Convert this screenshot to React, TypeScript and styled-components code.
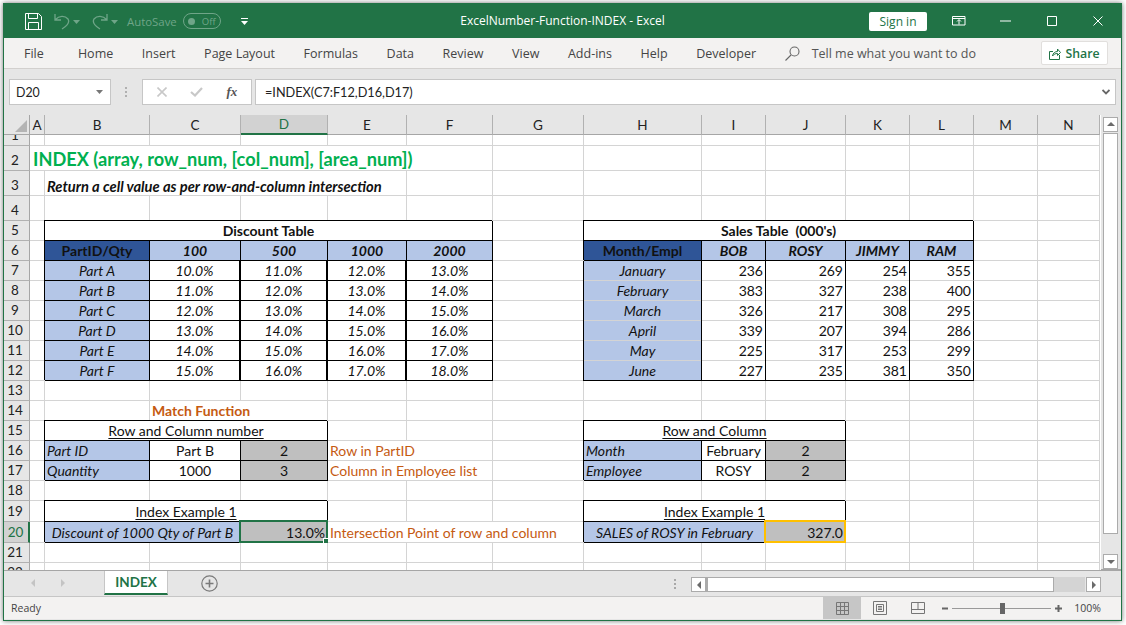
import React from 'react';
import styled, { createGlobalStyle } from 'styled-components';

const GREEN = '#217346';
const UI_FONT = '"Open Sans", "Noto Sans", sans-serif';
const SHEET_FONT = 'Lato, "Noto Sans", sans-serif';

const COLUMNS: [string, number][] = [
  ['A', 15], ['B', 105], ['C', 91], ['D', 87], ['E', 79], ['F', 86], ['G', 91],
  ['H', 118], ['I', 64], ['J', 80], ['K', 64], ['L', 64], ['M', 64], ['N', 62],
];
const ROW_HEIGHTS = [11, 25, 25, 25, 20, 20, 20, 20, 20, 20, 20, 20, 20, 20, 20, 20, 20, 20, 21, 21, 20, 20];

type Tone = 'dark' | 'light' | 'grey' | 'white';
type CellSpec = {
  text?: string;
  span?: number;
  tone?: Tone;
  bold?: boolean;
  italic?: boolean;
  align?: 'left' | 'center' | 'right';
  color?: string;
  boxed?: boolean;
  ledger?: 'middle' | 'last';
  heavy?: boolean;
  size?: number;
  heading?: boolean;
  underline?: boolean;
  frame?: 'selected' | 'orange';
};

const ORANGE = '#c55a11';
const cells: Record<string, CellSpec> = {
  A2: { text: 'INDEX (array, row_num, [col_num], [area_num])', span: 6, bold: true, color: '#00b050', size: 18.2, heading: true, align: 'left' },
  B3: { text: 'Return a cell value as per row-and-column intersection', span: 4, bold: true, italic: true, size: 14.7, align: 'left' },
  B5: { text: 'Discount Table', span: 5, bold: true, boxed: true, tone: 'white', align: 'center' },
  H5: { text: "Sales Table  (000's)", span: 5, bold: true, boxed: true, tone: 'white', align: 'center' },
  C14: { text: 'Match Function', span: 2, bold: true, color: ORANGE, align: 'left' },
  B15: { text: 'Row and Column number', span: 3, underline: true, boxed: true, tone: 'white', align: 'center' },
  H15: { text: 'Row and Column', span: 3, underline: true, boxed: true, tone: 'white', align: 'center' },
  E16: { text: 'Row in PartID', span: 2, color: ORANGE, align: 'left' },
  E17: { text: 'Column in Employee list', span: 2, color: ORANGE, align: 'left' },
  B19: { text: 'Index Example 1', span: 3, underline: true, boxed: true, tone: 'white', align: 'center' },
  H19: { text: 'Index Example 1', span: 3, underline: true, boxed: true, tone: 'white', align: 'center' },
  B20: { text: 'Discount of 1000 Qty of Part B', span: 2, italic: true, tone: 'light', boxed: true, align: 'center' },
  D20: { text: '13.0%', tone: 'grey', boxed: true, align: 'right', frame: 'selected' },
  E20: { text: 'Intersection Point of row and column', span: 3, color: ORANGE, align: 'left' },
  H20: { text: 'SALES of ROSY in February', span: 2, italic: true, tone: 'light', boxed: true, align: 'center' },
  J20: { text: '327.0', tone: 'grey', boxed: true, align: 'right', frame: 'orange' },
};

const fillTable = (
  cols: string[],
  title: string,
  heads: string[],
  labels: string[],
  values: (string | number)[][],
  numeric: boolean,
) => {
  cells[`${cols[0]}6`] = { text: title, tone: 'dark', bold: true, boxed: true, align: 'center' };
  heads.forEach((h, i) => {
    cells[`${cols[i + 1]}6`] = { text: h, tone: 'light', bold: true, italic: true, boxed: true, align: 'center' };
  });
  labels.forEach((label, r) => {
    // the sales table has thin grey rules between its rows, the discount table black ones
    const ledger = numeric ? (r === labels.length - 1 ? 'last' : 'middle') : undefined;
    cells[`${cols[0]}${r + 7}`] = { text: label, tone: 'light', italic: true, boxed: !numeric, ledger, align: 'center' };
    values[r].forEach((v, i) => {
      cells[`${cols[i + 1]}${r + 7}`] = {
        text: String(v),
        tone: 'white',
        boxed: !numeric,
        ledger,
        heavy: !numeric && i < 3,
        italic: !numeric,
        align: numeric ? 'right' : 'center',
      };
    });
  });
};

fillTable(
  ['B', 'C', 'D', 'E', 'F'],
  'PartID/Qty',
  ['100', '500', '1000', '2000'],
  ['Part A', 'Part B', 'Part C', 'Part D', 'Part E', 'Part F'],
  [0, 1, 2, 3, 4, 5].map((r) => [10, 11, 12, 13].map((v) => `${v + r}.0%`)),
  false,
);
fillTable(
  ['H', 'I', 'J', 'K', 'L'],
  'Month/Empl',
  ['BOB', 'ROSY', 'JIMMY', 'RAM'],
  ['January', 'February', 'March', 'April', 'May', 'June'],
  [
    [236, 269, 254, 355],
    [383, 327, 238, 400],
    [326, 217, 308, 295],
    [339, 207, 394, 286],
    [225, 317, 253, 299],
    [227, 235, 381, 350],
  ],
  true,
);

const smallRows: [number, string, string, string, string][] = [
  [16, 'B', 'Part ID', 'Part B', '2'],
  [17, 'B', 'Quantity', '1000', '3'],
  [16, 'H', 'Month', 'February', '2'],
  [17, 'H', 'Employee', 'ROSY', '2'],
];
smallRows.forEach(([row, col, label, value, index]) => {
  const [second, third] = col === 'B' ? ['C', 'D'] : ['I', 'J'];
  cells[`${col}${row}`] = { text: label, tone: 'light', italic: true, boxed: true, align: 'left' };
  cells[`${second}${row}`] = { text: value, tone: 'white', boxed: true, align: 'center' };
  cells[`${third}${row}`] = { text: index, tone: 'grey', boxed: true, align: 'center' };
});

const TONES: Record<Tone, string> = {
  dark: '#2f5597',
  light: '#b4c6e7',
  grey: '#bfbfbf',
  white: '#ffffff',
};
const JUSTIFY = { left: 'flex-start', center: 'center', right: 'flex-end' };

const GlobalStyle = createGlobalStyle`
  html, body { margin: 0; padding: 0; background: #fff; overflow: hidden; }
  * { box-sizing: border-box; }
`;

const Page = styled.div`
  width: 1126px;
  height: 625px;
  padding: 3px 4px 4px 3px;
`;

const Window = styled.div`
  width: 1119px;
  height: 618px;
  display: flex;
  flex-direction: column;
  border: 1px solid ${GREEN};
  box-shadow: 0 0 5px rgba(0, 0, 0, 0.55);
  font-family: ${UI_FONT};
  background: #e6e6e6;
`;

const TitleBar = styled.header`
  height: 34px;
  flex: none;
  display: grid;
  grid-template-columns: 1fr auto 1fr;
  align-items: center;
  background: ${GREEN};
  color: #fff;
`;

const QuickAccess = styled.div`
  display: flex;
  align-items: center;
  padding-left: 21px;
`;

const QuickGap = styled.span`
  width: 12px;
`;

const AutoSaveLabel = styled.span`
  font-size: 11.4px;
  color: #6fa588;
  margin: 0 6px 0 9px;
`;

const Toggle = styled.span`
  width: 38px;
  height: 16px;
  border: 1px solid #6fa588;
  border-radius: 8px;
  display: flex;
  align-items: center;
  gap: 7px;
  padding-left: 4px;
  font-size: 9.5px;
  color: #6fa588;
  &::before {
    content: '';
    width: 7px;
    height: 7px;
    border-radius: 50%;
    background: #6fa588;
  }
`;

const TitleText = styled.div`
  font-size: 12px;
  margin-top: -1px;
`;

const WindowControls = styled.div`
  display: flex;
  align-items: center;
  justify-content: flex-end;
  padding-right: 18px;
`;

const SignIn = styled.button`
  width: 58px;
  height: 19px;
  margin-right: 25px;
  padding: 0;
  border: 0;
  border-radius: 2px;
  background: #fff;
  color: ${GREEN};
  font: 12px ${UI_FONT};
`;

const TabsBar = styled.nav`
  height: 31px;
  flex: none;
  display: flex;
  align-items: center;
  gap: 28.6px;
  padding: 0 13px 0 20px;
  background: #f3f2f1;
  border-bottom: 1px solid #d2d0ce;
  color: #444;
  font-size: 12.5px;
`;

const TabLabel = styled.span<{ $first?: boolean }>`
  margin-right: ${(p) => (p.$first ? 5.5 : 0)}px;
`;

const TellMe = styled.div`
  display: flex;
  align-items: center;
  gap: 12px;
  color: #555;
`;

const ShareButton = styled.button`
  margin-left: auto;
  width: 67px;
  height: 24px;
  padding: 0;
  border: 1px solid #e1dfdd;
  border-radius: 2px;
  background: #fff;
  color: ${GREEN};
  font: 600 12.3px ${UI_FONT};
  display: flex;
  align-items: center;
  justify-content: center;
  gap: 4px;
`;

const FormulaBar = styled.div`
  height: 46px;
  flex: none;
  display: flex;
  align-items: flex-start;
  padding: 10px 5px 0 5px;
`;

const FieldBox = styled.div`
  height: 26px;
  background: #fff;
  border: 1px solid #c6c6c6;
  display: flex;
  align-items: center;
`;

const NameBox = styled(FieldBox)`
  width: 102px;
  justify-content: space-between;
  padding: 0 7px 0 6px;
  font: 12.4px ${SHEET_FONT};
  color: #222;
`;

const Grip = styled.div`
  width: 31px;
  height: 26px;
  display: flex;
  align-items: center;
  justify-content: center;
`;

const FormulaButtons = styled(FieldBox)`
  width: 110px;
  justify-content: space-around;
  padding: 0 2px;
`;

const FxLabel = styled.span`
  font: italic bold 13px "Liberation Serif", serif;
  color: #555;
`;

const FormulaInput = styled(FieldBox)`
  flex: 1;
  margin-left: 3px;
  padding: 0 5px 0 9px;
  justify-content: space-between;
  font: 12.7px ${SHEET_FONT};
  color: #222;
`;

const SheetArea = styled.div`
  height: 456px;
  flex: none;
  display: flex;
  background: #e6e6e6;
  border-bottom: 2px solid #a6a6a6;
`;

const Grid = styled.div`
  width: 1097px;
  height: 455px;
  overflow: hidden;
  display: grid;
  grid-template-columns: 26px ${COLUMNS.map(([, w]) => `${w}px`).join(' ')};
  grid-template-rows: 20px ${ROW_HEIGHTS.map((h) => `${h}px`).join(' ')};
  background: #fff;
  font: 13.5px ${SHEET_FONT};
  color: #111;
`;

const Corner = styled.div`
  background: #e6e6e6;
  border-right: 1px solid #a6a6a6;
  border-bottom: 1px solid #a6a6a6;
  display: flex;
  align-items: flex-end;
  justify-content: flex-end;
  padding: 0 2px 2px 0;
`;

const ColHeader = styled.div<{ $active?: boolean }>`
  display: flex;
  align-items: center;
  justify-content: center;
  background: ${(p) => (p.$active ? '#d2d2d2' : '#e6e6e6')};
  color: ${(p) => (p.$active ? GREEN : '#222')};
  border-right: 1px solid #b1b1b1;
  border-bottom: ${(p) => (p.$active ? `2px solid ${GREEN}` : '1px solid #a6a6a6')};
`;

const RowHeader = styled.div<{ $active?: boolean }>`
  display: flex;
  align-items: flex-end;
  justify-content: center;
  overflow: hidden;
  line-height: 19px;
  padding-right: ${(p) => (p.$active ? 1 : 3)}px;
  background: ${(p) => (p.$active ? '#d2d2d2' : '#e6e6e6')};
  color: ${(p) => (p.$active ? GREEN : '#222')};
  border-bottom: 1px solid #b1b1b1;
  border-right: ${(p) => (p.$active ? `2px solid ${GREEN}` : '1px solid #a6a6a6')};
`;

const ruleColour = (p: { $boxed?: boolean; $ledger?: 'middle' | 'last' }) =>
  p.$boxed || p.$ledger === 'last' ? '#000' : '#d4d4d4';

const Cell = styled.div<{
  $span: number;
  $tone?: Tone;
  $bold?: boolean;
  $italic?: boolean;
  $align: 'left' | 'center' | 'right';
  $color?: string;
  $boxed?: boolean;
  $ledger?: 'middle' | 'last';
  $heavy?: boolean;
  $size?: number;
  $heading?: boolean;
}>`
  position: relative;
  grid-column: span ${(p) => p.$span};
  display: flex;
  align-items: flex-end;
  justify-content: ${(p) => JUSTIFY[p.$align]};
  padding: ${(p) => (p.$heading ? '0 2px 2px 3px' : '0 2px')};
  line-height: 18px;
  white-space: pre;
  overflow: visible;
  background: ${(p) => (p.$tone ? TONES[p.$tone] : 'transparent')};
  color: ${(p) => p.$color ?? '#111'};
  font-weight: ${(p) => (p.$bold ? 700 : 400)};
  font-style: ${(p) => (p.$italic ? 'italic' : 'normal')};
  font-size: ${(p) => p.$size ?? 14}px;
  border-right: ${(p) => (p.$heavy ? 2 : 1)}px solid ${(p) => (p.$boxed || p.$ledger ? '#000' : '#d4d4d4')};
  border-bottom: 1px solid ${ruleColour};
  box-shadow: ${(p) => (p.$boxed ? '-1px -1px 0 #000' : p.$ledger ? '-1px 0 0 #000' : 'none')};
`;

const Underlined = styled.span`
  text-decoration: underline;
  text-underline-offset: 2px;
`;

const CellFrame = styled.div<{ $color: string }>`
  position: absolute;
  inset: -2px -1px -1px -2px;
  border: 2px solid ${(p) => p.$color};
  pointer-events: none;
`;

const FillHandle = styled.div`
  position: absolute;
  right: -3px;
  bottom: -3px;
  width: 6px;
  height: 6px;
  background: ${GREEN};
  border: 1px solid #fff;
`;

const VScroll = styled.div`
  flex: 1;
  display: flex;
  flex-direction: column;
  padding: 2px 3px 0 2px;
`;

const ScrollButton = styled.div`
  flex: none;
  width: 15px;
  height: 15px;
  background: #fff;
  border: 1px solid #ababab;
  display: flex;
  align-items: center;
  justify-content: center;
`;

const VThumb = styled.div`
  height: 401px;
  flex: none;
  margin-top: 1px;
  background: #fff;
  border: 1px solid #ababab;
`;

const VTrack = styled.div`
  flex: 1;
`;

const SheetTabs = styled.div`
  height: 26px;
  flex: none;
  display: flex;
  align-items: flex-start;
  background: #e6e6e6;
  border-bottom: 1px solid #c6c6c6;
`;

const TabNav = styled.div`
  width: 100px;
  height: 24px;
  display: flex;
  align-items: center;
  gap: 22px;
  padding-left: 25px;
`;

const SheetTab = styled.div`
  width: 64px;
  height: 24px;
  background: #fff;
  border-left: 1px solid #c6c6c6;
  border-right: 1px solid #c6c6c6;
  border-bottom: 2px solid ${GREEN};
  color: ${GREEN};
  font: 700 13.5px ${SHEET_FONT};
  text-align: center;
  line-height: 23px;
`;

const AddSheet = styled.div`
  margin-left: 33px;
  height: 24px;
  display: flex;
  align-items: center;
  flex: 1;
`;

const HScroll = styled.div`
  width: 410px;
  height: 15px;
  margin: 6px 20px 0 0;
  display: flex;
`;

const HThumb = styled.div`
  width: 350px;
  height: 15px;
  background: #fff;
  border: 1px solid #ababab;
  border-left-width: 2px;
`;

const HTrack = styled.div`
  width: 31px;
  height: 15px;
  background: #d4d4d4;
  margin-right: 1px;
`;

const StatusBar = styled.footer`
  height: 22px;
  flex: none;
  display: flex;
  align-items: center;
  justify-content: space-between;
  background: #f3f2f1;
  padding: 0 20px 0 7px;
  font-size: 10.5px;
  color: #444;
`;

const StatusRight = styled.div`
  height: 22px;
  display: flex;
  align-items: center;
`;

const ViewButton = styled.div<{ $active?: boolean }>`
  width: 38px;
  height: 22px;
  display: flex;
  align-items: center;
  justify-content: center;
  background: ${(p) => (p.$active ? '#c6c6c6' : 'transparent')};
`;

const ZoomGap = styled.span`
  width: 5px;
`;

const ZoomSlider = styled.div`
  position: relative;
  width: 99px;
  height: 1px;
  margin: 0 4px 0 3px;
  background: #999;
`;

const ZoomThumb = styled.div`
  position: absolute;
  left: 48px;
  top: -5px;
  width: 5px;
  height: 11px;
  background: #666;
`;

const ZoomValue = styled.span`
  margin-left: 12px;
`;

const Icon = styled.svg`
  display: block;
  flex: none;
`;

const Caret = ({ color = '#6fa588', down = 0 }: { color?: string; down?: number }) => (
  <Icon width="7" height="4" viewBox="0 0 7 4" style={{ marginTop: down }}>
    <path d="M0 0h7L3.5 4z" fill={color} />
  </Icon>
);

const SaveIcon = () => (
  <Icon width="17" height="17" viewBox="0 0 17 17" fill="none" stroke="#fff" strokeWidth="1">
    <path d="M.5.5h13l3 3v13H.5z" />
    <path d="M3.5.5v5h9v-5M3.5 16.5v-7h10v7" />
  </Icon>
);

const UndoIcon = ({ flip }: { flip?: boolean }) => (
  <Icon
    width="16"
    height="17"
    viewBox="0 0 16 17"
    fill="none"
    stroke="#6fa588"
    strokeWidth="1.3"
    style={{ transform: flip ? 'scaleX(-1)' : undefined, margin: '0 3px 0 0' }}
  >
    <path d="M1 1v6h6M1.5 6.5 C5 2.5 11 2.5 14 6 C16 9.5 13 13 8 16" />
  </Icon>
);

const CustomizeIcon = () => (
  <Icon width="7" height="7" viewBox="0 0 7 7" style={{ marginLeft: 20 }}>
    <path d="M0 0h7v1H0zM0 3h7L3.5 7z" fill="#fff" />
  </Icon>
);

const RibbonIcon = () => (
  <Icon width="14" height="10" viewBox="0 0 14 10" fill="none" stroke="#fff" style={{ marginRight: 34 }}>
    <path d="M.5.5h12.500v8.500H.5zM.5 2.500h12.500M7 8.500V4M5 5.500l2-2 2 2" />
  </Icon>
);

const MinimizeIcon = () => (
  <Icon width="11" height="10" viewBox="0 0 11 10" style={{ marginRight: 36 }}>
    <path d="M0 4.500h11v1H0z" fill="#fff" />
  </Icon>
);

const MaximizeIcon = () => (
  <Icon width="10" height="10" viewBox="0 0 10 10" fill="none" stroke="#fff" style={{ marginRight: 36 }}>
    <path d="M.5.5h9v9h-9z" />
  </Icon>
);

const CloseIcon = () => (
  <Icon width="10" height="10" viewBox="0 0 10 10" fill="none" stroke="#fff">
    <path d="M.5.500l9 9M9.500.5l-9 9" />
  </Icon>
);

const SearchIcon = () => (
  <Icon width="15" height="15" viewBox="0 0 15 15" fill="none" stroke="#666" strokeWidth="1.1">
    <circle cx="9.500" cy="5.500" r="4.500" />
    <path d="M6 9l-5.500 5.500" />
  </Icon>
);

const ShareIcon = () => (
  <Icon width="12" height="13" viewBox="0 0 12 13" fill="none" stroke={GREEN}>
    <path d="M4 4.500H.5v8h10V8" />
    <path d="M3.500 9c.5-3 2.500-4.500 5-4.500V2l3 3.500-3 3V6.500c-2 0-3.500 .5-5 2.500z" />
  </Icon>
);

const ChevronDown = () => (
  <Icon width="8" height="6" viewBox="0 0 8 6" fill="none" stroke="#666" strokeWidth="1.8">
    <path d="M.5 1l3.500 3.500L7.500 1" />
  </Icon>
);

const GripDots = ({ color = '#b0b0b0' }: { color?: string }) => (
  <Icon width="3" height="11" viewBox="0 0 3 11" fill={color}>
    <path d="M0 0h2v2H0zM0 4h2v2H0zM0 8h2v2H0z" />
  </Icon>
);

const CancelIcon = () => (
  <Icon width="10" height="10" viewBox="0 0 10 10" fill="none" stroke="#c8c8c8" strokeWidth="1.6">
    <path d="M.5.500l9 9M9.500.5l-9 9" />
  </Icon>
);

const CheckIcon = () => (
  <Icon width="13" height="10" viewBox="0 0 13 10" fill="none" stroke="#c8c8c8" strokeWidth="2.2">
    <path d="M1 5l4 3.500L12 1" />
  </Icon>
);

const CornerMark = () => (
  <Icon width="12" height="12" viewBox="0 0 12 12">
    <path d="M12 0v12H0z" fill="#b4b4b4" />
  </Icon>
);

const Arrow = ({ dir, color = '#6b6b6b' }: { dir: 'up' | 'down' | 'left' | 'right'; color?: string }) => {
  const d = {
    up: 'M4 1l4 4H0z',
    down: 'M0 2h8L4 6z',
    left: 'M6 0v8L2 4z',
    right: 'M2 0v8l4-4z',
  }[dir];
  return (
    <Icon width="8" height="8" viewBox="0 0 8 8">
      <path d={d} fill={color} />
    </Icon>
  );
};

const PlusCircle = () => (
  <Icon width="17" height="17" viewBox="0 0 17 17" fill="none" stroke="#7a7a7a">
    <circle cx="8.500" cy="8.500" r="7.700" strokeWidth="1.200" />
    <path d="M8.500 4.500v8M4.500 8.500h8" strokeWidth="1.600" />
  </Icon>
);

const NormalViewIcon = () => (
  <Icon width="13" height="13" viewBox="0 0 13 13" fill="none" stroke="#767676">
    <path d="M.5.500h12v12H.5zM.5 4.500h12M.5 8.500h12M4.500.5v12M8.500.5v12" />
  </Icon>
);

const PageViewIcon = () => (
  <Icon width="14" height="14" viewBox="0 0 14 14" fill="none" stroke="#767676">
    <path d="M.5.500h13v13H.5zM3.500 3.500h7v7h-7zM5 5.500h4M5 7h4M5 8.500h4" />
  </Icon>
);

const BreakViewIcon = () => (
  <Icon width="14" height="12" viewBox="0 0 14 12" fill="none" stroke="#767676">
    <path d="M.5.500h13v11H.5zM.5 7.500h13M7 .5v7" />
  </Icon>
);

const ZoomSign = ({ plus }: { plus?: boolean }) => (
  <Icon width="7" height="7" viewBox="0 0 7 7" fill="#666">
    <path d={plus ? 'M0 2.500h7v2H0zM2.500 0h2v7h-2z' : 'M0 2.500h6v2H0z'} />
  </Icon>
);

const renderCell = (address: string, spec: CellSpec | undefined) => (
  <Cell
    key={address}
    $span={spec?.span ?? 1}
    $tone={spec?.tone}
    $bold={spec?.bold}
    $italic={spec?.italic}
    $align={spec?.align ?? 'left'}
    $color={spec?.color}
    $boxed={spec?.boxed}
    $ledger={spec?.ledger}
    $heavy={spec?.heavy}
    $size={spec?.size}
    $heading={spec?.heading}
  >
    {spec?.underline ? <Underlined>{spec.text}</Underlined> : spec?.text}
    {spec?.frame === 'selected' && (
      <CellFrame $color={GREEN}>
        <FillHandle />
      </CellFrame>
    )}
    {spec?.frame === 'orange' && <CellFrame $color="#ffc000" />}
  </Cell>
);

const renderRow = (rowNumber: number) => {
  const out: React.ReactNode[] = [
    <RowHeader key={`r${rowNumber}`} $active={rowNumber === 20}>
      {rowNumber}
    </RowHeader>,
  ];
  let i = 0;
  while (i < COLUMNS.length) {
    const address = `${COLUMNS[i][0]}${rowNumber}`;
    const spec = cells[address];
    out.push(renderCell(address, spec));
    i += spec?.span ?? 1;
  }
  return out;
};

const TABS = ['Home', 'Insert', 'Page Layout', 'Formulas', 'Data', 'Review', 'View', 'Add-ins', 'Help', 'Developer'];

const App = () => (
  <Page>
    <GlobalStyle />
    <Window>
      <TitleBar>
        <QuickAccess>
          <SaveIcon />
          <QuickGap />
          <UndoIcon />
          <Caret down={1} />
          <QuickGap />
          <UndoIcon flip />
          <Caret down={1} />
          <AutoSaveLabel>AutoSave</AutoSaveLabel>
          <Toggle>Off</Toggle>
          <CustomizeIcon />
        </QuickAccess>
        <TitleText>ExcelNumber-Function-INDEX  -  Excel</TitleText>
        <WindowControls>
          <SignIn>Sign in</SignIn>
          <RibbonIcon />
          <MinimizeIcon />
          <MaximizeIcon />
          <CloseIcon />
        </WindowControls>
      </TitleBar>

      <TabsBar>
        <TabLabel $first>File</TabLabel>
        {TABS.map((t) => (
          <TabLabel key={t}>{t}</TabLabel>
        ))}
        <TellMe>
          <SearchIcon />
          Tell me what you want to do
        </TellMe>
        <ShareButton>
          <ShareIcon />
          Share
        </ShareButton>
      </TabsBar>

      <FormulaBar>
        <NameBox>
          D20
          <Caret color="#777" />
        </NameBox>
        <Grip>
          <GripDots />
        </Grip>
        <FormulaButtons>
          <CancelIcon />
          <CheckIcon />
          <FxLabel>fx</FxLabel>
        </FormulaButtons>
        <FormulaInput>
          =INDEX(C7:F12,D16,D17)
          <ChevronDown />
        </FormulaInput>
      </FormulaBar>

      <SheetArea>
        <Grid>
          <Corner>
            <CornerMark />
          </Corner>
          {COLUMNS.map(([name]) => (
            <ColHeader key={name} $active={name === 'D'}>
              {name}
            </ColHeader>
          ))}
          {ROW_HEIGHTS.map((_, idx) => renderRow(idx + 1))}
        </Grid>
        <VScroll>
          <ScrollButton>
            <Arrow dir="up" />
          </ScrollButton>
          <VThumb />
          <VTrack />
          <ScrollButton>
            <Arrow dir="down" />
          </ScrollButton>
        </VScroll>
      </SheetArea>

      <SheetTabs>
        <TabNav>
          <Arrow dir="left" color="#c4c4c4" />
          <Arrow dir="right" color="#c4c4c4" />
        </TabNav>
        <SheetTab>INDEX</SheetTab>
        <AddSheet>
          <PlusCircle />
        </AddSheet>
        <Grip>
          <GripDots color="#a8a8a8" />
        </Grip>
        <HScroll>
          <ScrollButton>
            <Arrow dir="left" />
          </ScrollButton>
          <HThumb />
          <HTrack />
          <ScrollButton>
            <Arrow dir="right" />
          </ScrollButton>
        </HScroll>
      </SheetTabs>

      <StatusBar>
        <span>Ready</span>
        <StatusRight>
          <ViewButton $active>
            <NormalViewIcon />
          </ViewButton>
          <ViewButton>
            <PageViewIcon />
          </ViewButton>
          <ViewButton>
            <BreakViewIcon />
          </ViewButton>
          <ZoomGap />
          <ZoomSign />
          <ZoomSlider>
            <ZoomThumb />
          </ZoomSlider>
          <ZoomSign plus />
          <ZoomValue>100%</ZoomValue>
        </StatusRight>
      </StatusBar>
    </Window>
  </Page>
);

export default App;
